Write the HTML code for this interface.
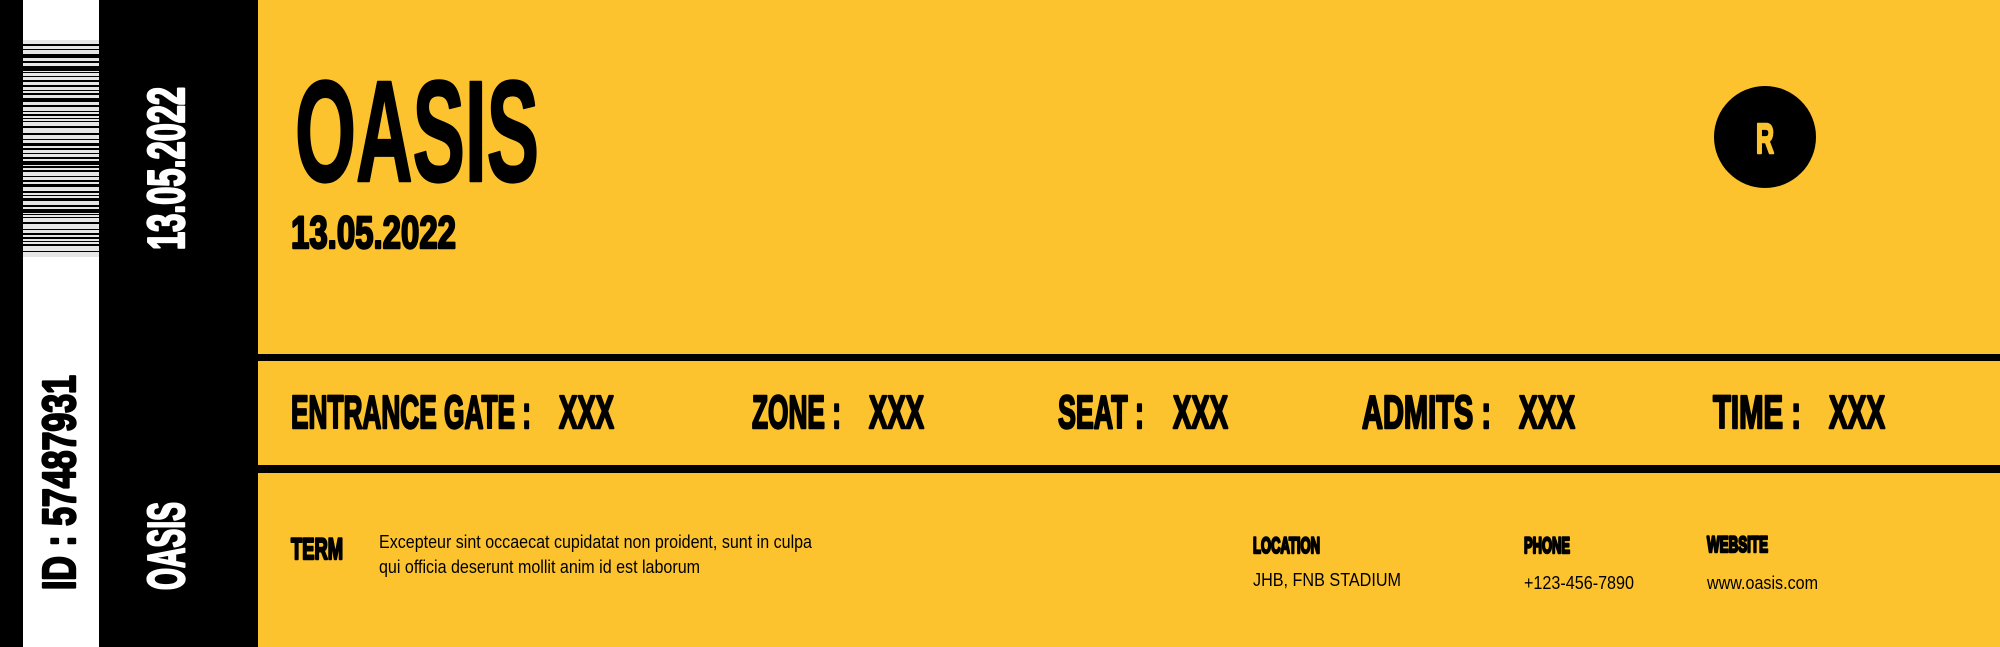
<!DOCTYPE html>
<html><head><meta charset="utf-8"><style>
html,body{margin:0;padding:0;width:2000px;height:647px;overflow:hidden;background:#FCC32F}
svg{display:block}
.h{font-family:"Liberation Sans",sans-serif;font-weight:bold;fill:#000;stroke:#000;stroke-width:2.4;stroke-linejoin:round}
.w{fill:#fff;stroke:#fff}
.b{font-family:"Liberation Sans",sans-serif;fill:#000}
</style></head><body>
<svg width="2000" height="647" viewBox="0 0 2000 647" xmlns="http://www.w3.org/2000/svg">
<rect width="2000" height="647" fill="#FCC32F"/>
<rect x="0" y="0" width="23" height="647" fill="#000"/>
<rect x="23" y="0" width="76" height="647" fill="#fff"/>
<rect x="99" y="0" width="159" height="647" fill="#000"/>
<!-- barcode -->
<rect x="23" y="40" width="76" height="217" fill="#e6e6e6"/>
<g fill="#000">
<rect x="23" y="44" width="76" height="2"/><rect x="23" y="49" width="76" height="1"/><rect x="23" y="54" width="76" height="4"/><rect x="23" y="61" width="76" height="2"/><rect x="23" y="66" width="76" height="5"/>
<rect x="23" y="76" width="76" height="1"/><rect x="23" y="80" width="76" height="2"/><rect x="23" y="85" width="76" height="2"/><rect x="23" y="90" width="76" height="1"/><rect x="23" y="98" width="76" height="4"/>
<rect x="23" y="105" width="76" height="2"/><rect x="23" y="111" width="76" height="1"/><rect x="23" y="114" width="76" height="2"/><rect x="23" y="121" width="76" height="1"/><rect x="23" y="126" width="76" height="2"/>
<rect x="23" y="133" width="76" height="2"/><rect x="23" y="139" width="76" height="1"/><rect x="23" y="143" width="76" height="3"/><rect x="23" y="148" width="76" height="2"/><rect x="23" y="153" width="76" height="1"/>
<rect x="23" y="157" width="76" height="2"/><rect x="23" y="161" width="76" height="4"/><rect x="23" y="170" width="76" height="2"/><rect x="23" y="176" width="76" height="1"/><rect x="23" y="180" width="76" height="2"/>
<rect x="23" y="184" width="76" height="3"/><rect x="23" y="191" width="76" height="2"/><rect x="23" y="195" width="76" height="1"/><rect x="23" y="198" width="76" height="3"/><rect x="23" y="205" width="76" height="2"/>
<rect x="23" y="209" width="76" height="4"/><rect x="23" y="217" width="76" height="1"/><rect x="23" y="222" width="76" height="2"/><rect x="23" y="229" width="76" height="1"/><rect x="23" y="233" width="76" height="2"/>
<rect x="23" y="241" width="76" height="1"/><rect x="23" y="244" width="76" height="2"/><rect x="23" y="251" width="76" height="1"/>
<rect x="23" y="72" width="76" height="1"/><rect x="23" y="93" width="76" height="2"/><rect x="23" y="118" width="76" height="1"/><rect x="23" y="166" width="76" height="2"/><rect x="23" y="214" width="76" height="1"/><rect x="23" y="237" width="76" height="2"/>
</g>
<!-- lines -->
<rect x="258" y="354" width="1742" height="7" fill="#000"/>
<rect x="258" y="465" width="1742" height="8" fill="#000"/>
<!-- vertical texts -->
<text class="h w" font-size="52" textLength="163" lengthAdjust="spacingAndGlyphs" transform="translate(184,250) rotate(-90)">13.05.2022</text>
<text class="h" font-size="46" textLength="215" lengthAdjust="spacingAndGlyphs" transform="translate(75,590) rotate(-90)">ID : 57487931</text>
<text class="h w" font-size="52" textLength="88" lengthAdjust="spacingAndGlyphs" transform="translate(184,590) rotate(-90)">OASIS</text>
<!-- title -->
<text class="h" x="295" y="181" font-size="144" stroke-width="6" textLength="244" lengthAdjust="spacingAndGlyphs">OASIS</text>
<text class="h" x="291" y="248" font-size="45" textLength="165" lengthAdjust="spacingAndGlyphs">13.05.2022</text>
<!-- circle -->
<circle cx="1765" cy="137" r="51" fill="#000"/>
<text class="h" x="1756" y="153" font-size="42" style="fill:#FCC32F;stroke:#FCC32F" textLength="18" lengthAdjust="spacingAndGlyphs">R</text>
<!-- row -->
<g font-size="46">
<text class="h" x="291" y="428" textLength="240" lengthAdjust="spacingAndGlyphs">ENTRANCE GATE :</text>
<text class="h" x="559" y="428" textLength="55" lengthAdjust="spacingAndGlyphs">XXX</text>
<text class="h" x="752" y="428" textLength="89" lengthAdjust="spacingAndGlyphs">ZONE :</text>
<text class="h" x="869" y="428" textLength="55" lengthAdjust="spacingAndGlyphs">XXX</text>
<text class="h" x="1058" y="428" textLength="86" lengthAdjust="spacingAndGlyphs">SEAT :</text>
<text class="h" x="1173" y="428" textLength="55" lengthAdjust="spacingAndGlyphs">XXX</text>
<text class="h" x="1362" y="428" textLength="129" lengthAdjust="spacingAndGlyphs">ADMITS :</text>
<text class="h" x="1519" y="428" textLength="56" lengthAdjust="spacingAndGlyphs">XXX</text>
<text class="h" x="1713" y="428" textLength="88" lengthAdjust="spacingAndGlyphs">TIME :</text>
<text class="h" x="1829" y="428" textLength="56" lengthAdjust="spacingAndGlyphs">XXX</text>
</g>
<!-- footer -->
<text class="h" x="291" y="559" font-size="30" stroke-width="1.4" textLength="52" lengthAdjust="spacingAndGlyphs">TERM</text>
<text class="b" x="379" y="548" font-size="18" textLength="433" lengthAdjust="spacingAndGlyphs">Excepteur sint occaecat cupidatat non proident, sunt in culpa</text>
<text class="b" x="379" y="573" font-size="18" textLength="321" lengthAdjust="spacingAndGlyphs">qui officia deserunt mollit anim id est laborum</text>
<text class="h" x="1253" y="553" font-size="22" stroke-width="1" textLength="67" lengthAdjust="spacingAndGlyphs">LOCATION</text>
<text class="h" x="1524" y="553" font-size="22" stroke-width="1" textLength="46" lengthAdjust="spacingAndGlyphs">PHONE</text>
<text class="h" x="1707" y="552" font-size="22" stroke-width="1" textLength="61" lengthAdjust="spacingAndGlyphs">WEBSITE</text>
<text class="b" x="1253" y="586" font-size="18" textLength="148" lengthAdjust="spacingAndGlyphs">JHB, FNB STADIUM</text>
<text class="b" x="1524" y="589" font-size="18" textLength="110" lengthAdjust="spacingAndGlyphs">+123-456-7890</text>
<text class="b" x="1707" y="589" font-size="18" textLength="111" lengthAdjust="spacingAndGlyphs">www.oasis.com</text>
</svg>
</body></html>
